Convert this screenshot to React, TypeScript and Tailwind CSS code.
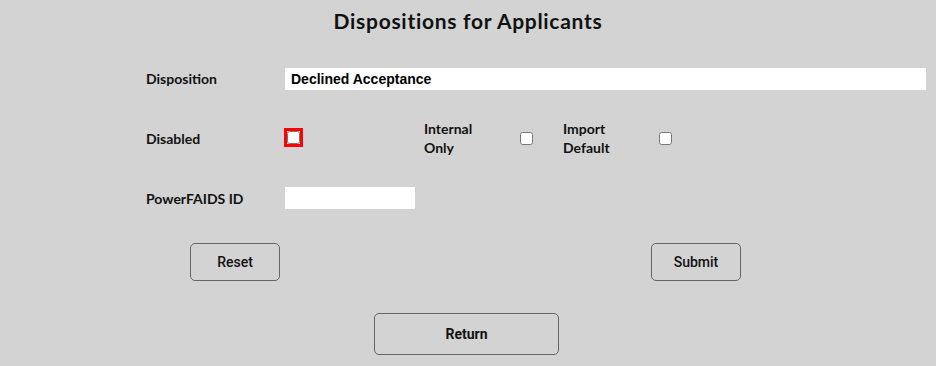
import React from 'react'

const labelFont = { fontFamily: 'Lato, "Open Sans", sans-serif' }

function Check({ focused = false }: { focused?: boolean }) {
  const box = <input type="checkbox" className="m-0 block h-[13px] w-[13px]" />
  if (!focused) return box
  return <span className="inline-flex border-[3px] border-[#ff0000]">{box}</span>
}

export default function App() {
  return (
    <div className="h-[366px] w-[936px] overflow-hidden bg-[#d3d3d3] text-[#111]">
      <h1
        className="pt-[8px] text-center text-[21px] leading-[26px] font-bold tracking-[0.7px]"
        style={labelFont}
      >
        Dispositions for Applicants
      </h1>

      <div className="pl-[146px] text-[14px] font-bold" style={labelFont}>
        {/* Disposition */}
        <div className="mt-[33px] flex h-[23px] items-center">
          <label className="w-[139px]">Disposition</label>
          <input
            defaultValue="Declined Acceptance"
            className="h-[22px] w-[641px] bg-white px-[6px] text-[14px] font-bold text-black outline-none"
            style={{ fontFamily: '"Liberation Sans", Arial, sans-serif' }}
          />
        </div>

        {/* Checkboxes */}
        <div className="mt-[29px] flex h-[38px] items-center">
          <label className="w-[138px]">Disabled</label>
          <div className="w-[140px]">
            <Check focused />
          </div>
          <label className="w-[96px] leading-[19px]">
            Internal
            <br />
            Only
          </label>
          <div className="w-[43px]">
            <Check />
          </div>
          <label className="w-[96px] leading-[19px]">
            Import
            <br />
            Default
          </label>
          <div>
            <Check />
          </div>
        </div>

        {/* PowerFAIDS ID */}
        <div className="mt-[30px] flex h-[22px] items-center">
          <label className="w-[139px]">PowerFAIDS ID</label>
          <input className="h-[22px] w-[130px] bg-white outline-none" />
        </div>
      </div>

      <div
        className="mt-[34px] flex pl-[190px] text-[14px] font-medium"
        style={{ fontFamily: 'Roboto, sans-serif' }}
      >
        <button className="h-[38px] w-[90px] rounded-[5px] border border-[#666] bg-transparent">
          Reset
        </button>
        <button className="ml-[371px] h-[38px] w-[90px] rounded-[5px] border border-[#666] bg-transparent">
          Submit
        </button>
      </div>

      <div className="mt-[32px] pl-[374px]" style={{ fontFamily: 'Roboto, sans-serif' }}>
        <button className="h-[42px] w-[185px] rounded-[5px] border border-[#666] bg-transparent text-[14px] font-bold">
          Return
        </button>
      </div>
    </div>
  )
}
